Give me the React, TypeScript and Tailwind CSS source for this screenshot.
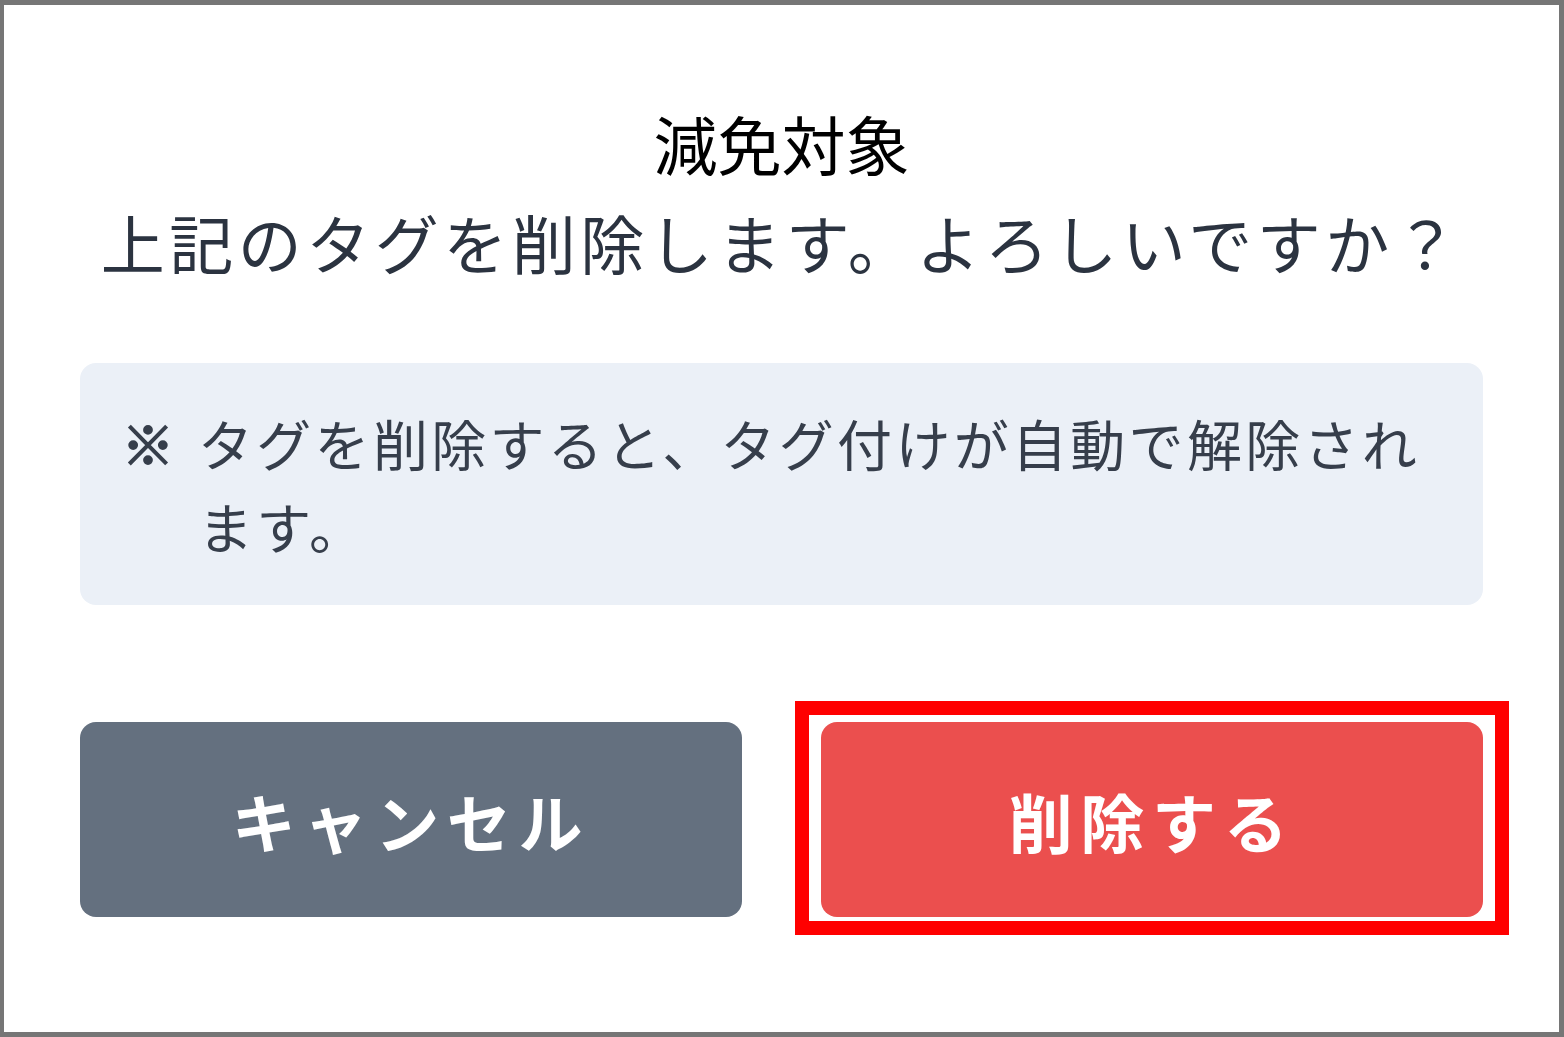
export default function App() {
  return (
    <div
      className="w-[1564px] h-[1037px] bg-white border-[5px] border-l-4 border-[#767676] flex flex-col items-center"
      style={{ fontFamily: '"Noto Sans CJK JP", "Noto Sans", sans-serif' }}
    >
      <h1 className="mt-[89px] text-[64px] leading-[96px] font-normal text-black">減免対象</h1>
      <p className="mt-[3px] text-[64px] leading-[96px] tracking-[0.07em] text-[#2b3340]">
        上記のタグを削除します。よろしいですか？
      </p>

      <div className="mt-[74px] w-[1403px] rounded-[16px] bg-[#ebf0f7] pl-[42px] pr-[36px] py-[38px] flex gap-[24px] text-[55px] leading-[83px] text-[#363e4b]">
        <span className="shrink-0 font-bold text-[52px] [-webkit-text-stroke:2px_#363e4b]">※</span>
        <p className="tracking-[0.06em]">タグを削除すると、タグ付けが自動で解除されます。</p>
      </div>

      <div className="mt-[117px] w-[1403px] grid grid-cols-2 gap-[79px]">
        <button className="h-[195px] rounded-[16px] bg-[#64707f] text-white text-[64px] font-bold tracking-[0.12em]">
          キャンセル
        </button>
        <div className="relative">
          <button className="w-full h-[195px] rounded-[16px] bg-[#eb4f4e] text-white text-[64px] font-bold tracking-[0.12em]">
            削除する
          </button>
          <span className="absolute -left-[26px] -right-[26px] -top-[21px] -bottom-[18px] border-[14px] border-[#ff0000] pointer-events-none" />
        </div>
      </div>
    </div>
  );
}
